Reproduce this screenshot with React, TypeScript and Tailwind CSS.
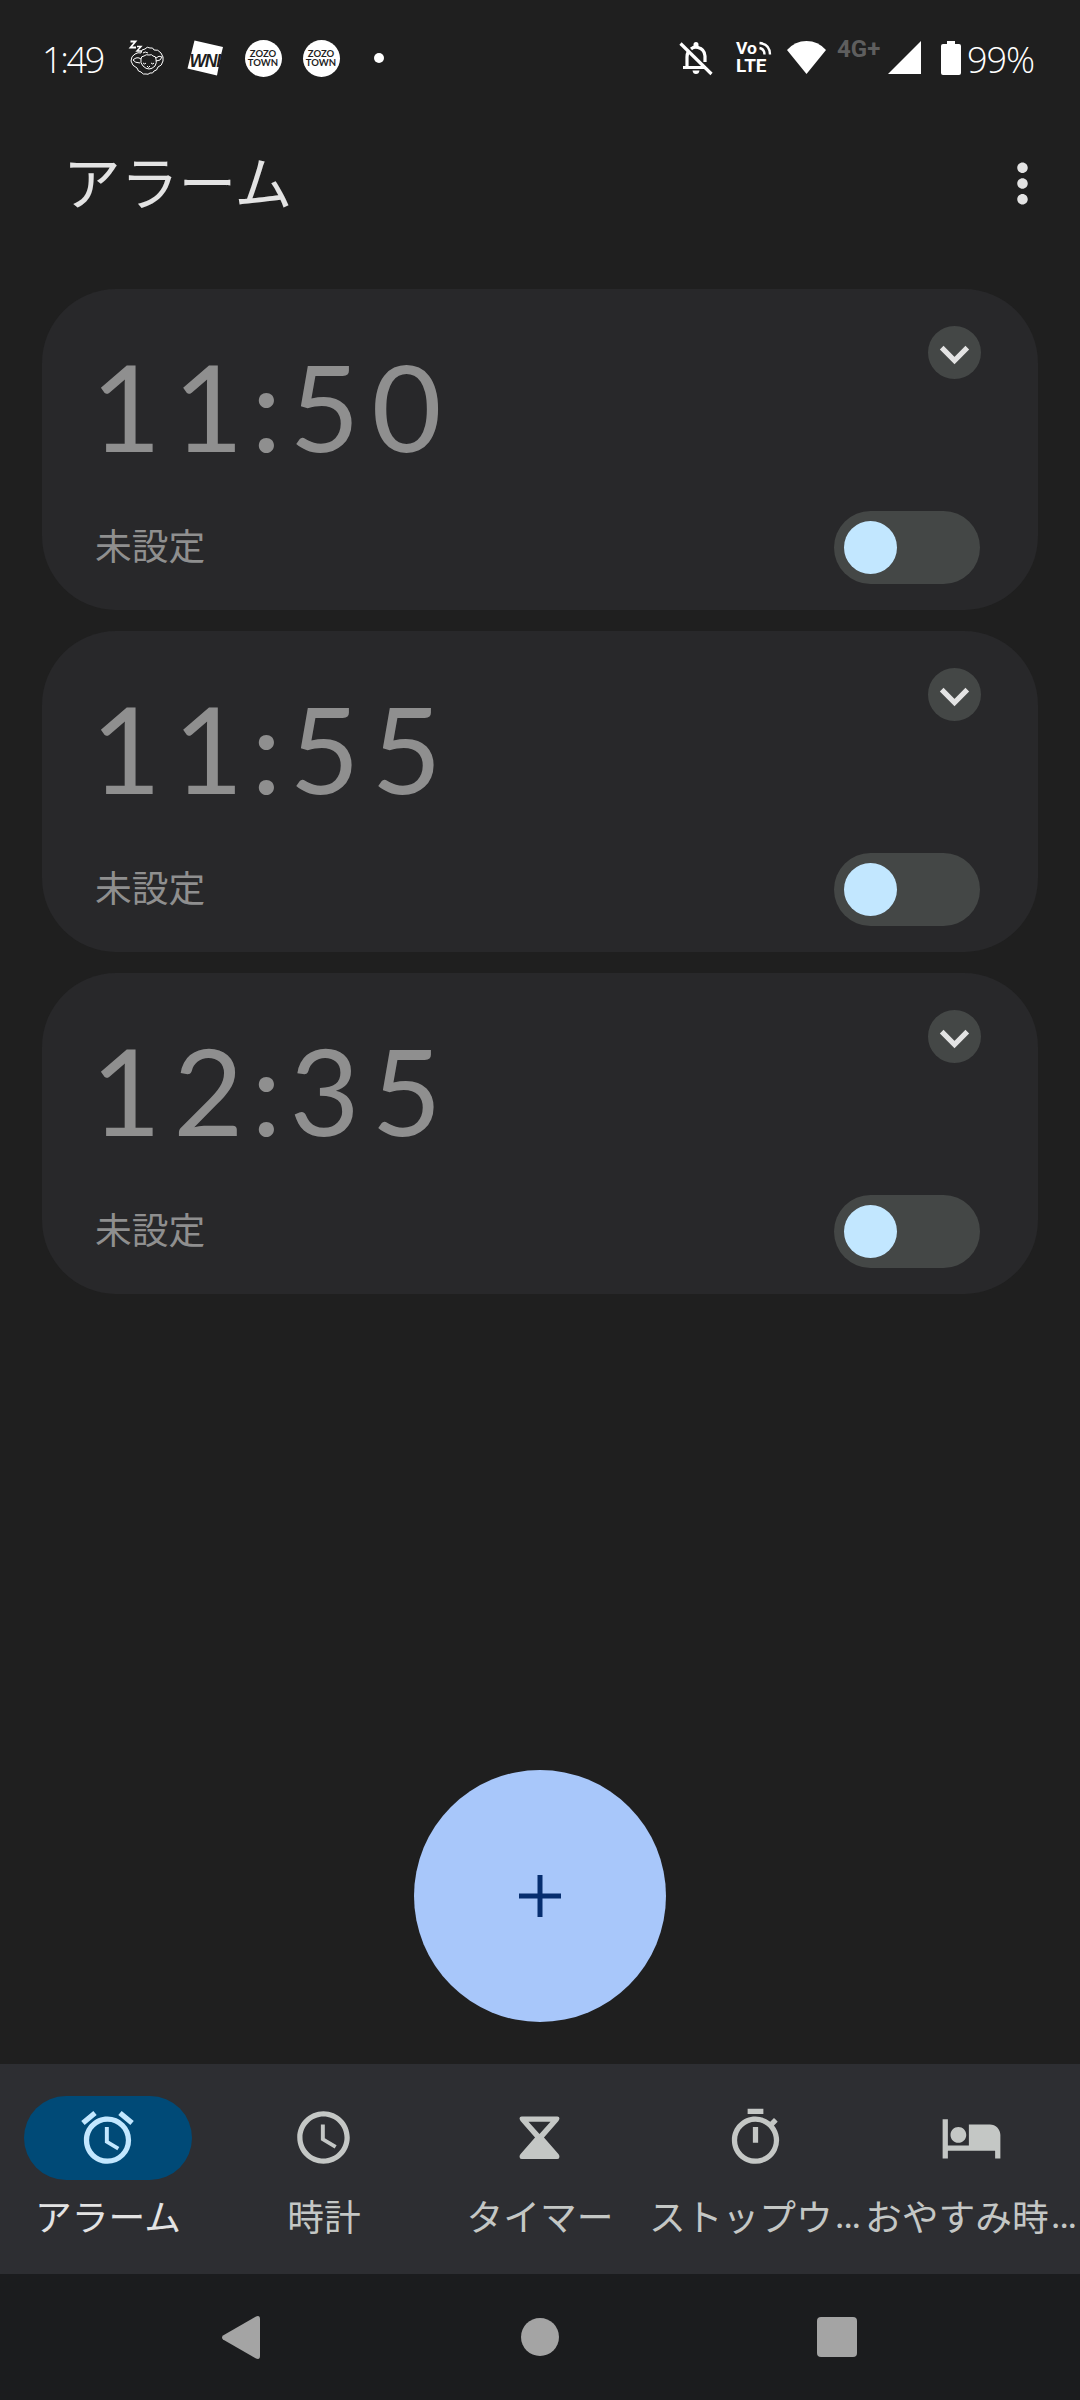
import React, { useState } from 'react';
import { MdAccessAlarm, MdAccessTime, MdMoreVert, MdOutlineTimer } from 'react-icons/md';

interface Alarm {
  id: number;
  hour: string;
  minute: string;
  label: string;
}

const alarms: Alarm[] = [
  { id: 1, hour: '11', minute: '50', label: '未設定' },
  { id: 2, hour: '11', minute: '55', label: '未設定' },
  { id: 3, hour: '12', minute: '35', label: '未設定' },
];

function SheepIcon() {
  return (
    <svg viewBox="0 0 38 38" className="w-[38px] h-[38px]" fill="none" stroke="white" strokeWidth="1">
      <path d="M2.500 2.500h5l-5 6h5.500" strokeWidth="1.800" />
      <path d="M9 7.500h4l-4 4.500h4.500" strokeWidth="1.500" />
      <path d="M13 14q0-4 4-4 2-3 5-1 3-1 4 2 4-1 7 3 3 4 2 8-1 5-5 6-1 4-4 4-1 3-4 2-2 2-4 1-3 1-5-2-3 0-4-4-5-2-6-7 0-5 4-7 3-2 6-1z" />
      <path d="M13 20q0-3 3-3 2-2 5-1 3-1 4 1 3 0 3 3 1 4-1 7-3 3-6 3t-6-3q-3-3-2-7z" />
      <path d="M13 20q-4-3-8 1 2 3 7 3M28 19q3-3 6-1-1 4-6 4M15 14q2-2 5 0" />
      <path d="M15 24q2 2 3 0M23 24q2 2 3 0M19 27l1.500 1.500L22 27" />
    </svg>
  );
}

function WeatherNewsIcon() {
  return (
    <svg viewBox="0 0 38 38" className="w-[38px] h-[38px]">
      <path d="M8.500 1.500 37 8 35.500 14 32.500 28.500 31 36.500 1.500 29.500z" fill="white" />
      <text
        x="3.500"
        y="27.500"
        fontFamily="Liberation Sans"
        fontWeight="700"
        fontStyle="italic"
        fontSize="17.500"
        letterSpacing="-1.200"
        fill="#1f1f1f"
      >
        WNI
      </text>
    </svg>
  );
}

function ZozoIcon() {
  return (
    <div className="flex size-[37px] mx-[0.5px] flex-col items-center justify-center rounded-full bg-white font-['Lato'] text-[9.5px] font-bold leading-[9.5px] text-[#1f1f1f]">
      <span>ZOZO</span>
      <span>TOWN</span>
    </div>
  );
}

function BellOffIcon() {
  return (
    <svg viewBox="0 0 38 38" className="ml-[1px] w-[38px] h-[38px]" fill="none" stroke="white" strokeWidth="3.200">
      <path d="M11.500 12q-1.500 3-1.500 6v10.500M6 28.500h23" />
      <path d="M14 10q3-2.500 7-1.500 6.500 1.500 7 8.500v6" />
      <path d="M3.500 4.500l31 30.500" />
      <path d="M16.500 7.500v-2q0-2.500 2.500-2.500t2.500 2.500v2zM15.500 31.500h7q-.5 3.500-3.500 3.500t-3.500-3.500z" fill="white" stroke="none" />
    </svg>
  );
}

function VolteIcon() {
  return (
    <svg viewBox="0 0 38 38" className="w-[38px] h-[38px]">
      <g fontFamily="Roboto" fontWeight="700" fill="white">
        <text x="1" y="14.500" fontSize="16.500" textLength="21" lengthAdjust="spacingAndGlyphs">Vo</text>
        <text x="1" y="33" fontSize="18.500" textLength="30.500" lengthAdjust="spacingAndGlyphs">LTE</text>
      </g>
      <path d="M24.500 9q5 1 5 6.500M24.500 4q10.500 1 10.500 11.500" fill="none" stroke="white" strokeWidth="2.400" />
    </svg>
  );
}

function StatusBar() {
  return (
    <div className="flex h-[116px] shrink-0 items-center text-white">
      <span className="w-[86px] ml-[42px] pt-[3px] font-['Open_Sans'] text-[36px] font-light leading-none tracking-[-2.3px]">
        1:49
      </span>
      <div className="flex items-center gap-5">
        <SheepIcon />
        <WeatherNewsIcon />
        <ZozoIcon />
        <ZozoIcon />
        <span className="mx-[14px] size-[10px] rounded-full bg-white" />
      </div>
      <div className="ml-auto mr-[46px] flex items-center">
        <BellOffIcon />
        <span className="w-[20px]" />
        <VolteIcon />
        <svg viewBox="0 0 39 34" className="ml-[14px] w-[39px] h-[34px]" fill="white">
          <path d="M0 9Q8 0 19.500 0T39 9L19.500 33z" />
        </svg>
        <span className="mb-[18px] ml-[11px] w-[51px] whitespace-nowrap font-['Roboto'] text-[24px] font-bold leading-none text-[#5e5e5e]">
          4G+
        </span>
        <svg viewBox="0 0 33 34" className="w-[33px] h-[34px]" fill="white">
          <path d="M33 0v33H0z" />
        </svg>
        <svg viewBox="0 0 20 34" className="ml-[20px] w-[20px] h-[34px]" fill="white">
          <path d="M6 0h8v3h4q2 0 2 2v27q0 2-2 2H2q-2 0-2-2V5q0-2 2-2h4z" />
        </svg>
        <span className="ml-[6px] w-[67px] whitespace-nowrap pt-[4px] font-['Open_Sans'] text-[36px] font-light leading-none tracking-[-1px]">
          99%
        </span>
      </div>
    </div>
  );
}

function Toggle() {
  const [on, setOn] = useState(false);
  return (
    <button
      role="switch"
      aria-checked={on}
      onClick={() => setOn(!on)}
      className={`flex h-[73px] w-[146px] items-center rounded-full bg-[#444746] px-[10px] ${on ? 'justify-end' : 'justify-start'}`}
    >
      <span className="size-[53px] rounded-full bg-[#c2e7ff]" />
    </button>
  );
}

function AlarmCard({ alarm }: { alarm: Alarm }) {
  return (
    <div className="flex h-[321px] justify-between rounded-[74px] bg-[#28282a] pl-[53px] pr-[58px] text-[#8f8f8f]">
      <div className="flex flex-col">
        <div className="mt-[57px] -ml-[4px] flex h-[120px] font-['Lato'] text-[121px] leading-[120px] tracking-[12px]">
          <span>{alarm.hour}</span>
          <span className="-ml-[12px] w-[46px] text-center tracking-normal">:</span>
          <span>{alarm.minute}</span>
        </div>
        <span className="mt-[51px] text-[36.75px] leading-[54px]">{alarm.label}</span>
      </div>
      <div className="flex flex-col items-end justify-between pt-[37px] pb-[26px]">
        <button className="-mr-px flex size-[53px] items-center justify-center rounded-full bg-[#444746]">
          <svg viewBox="0 0 53 53" className="size-[53px]" fill="none" stroke="#e3e3e3" strokeWidth="5.200">
            <path d="M13.700 21.700 26.500 34.500l12.800-12.800" />
          </svg>
        </button>
        <Toggle />
      </div>
    </div>
  );
}

function HourglassIcon() {
  return (
    <svg viewBox="0 0 24 24" className="size-[63px]" fill="currentColor">
      <path
        fillRule="evenodd"
        d="M5.200 4h13.600q.8 0 .8.700 0 .5-.4 1L13.700 12l5.500 6.300q.4.500.4 1 0 .9-.8.900H5.200q-.8 0-.8-.9 0-.5.400-1L10.300 12 4.800 5.700q-.4-.5-.4-1 0-.7.800-.7zM7.800 6 12 10.700 16.200 6z"
      />
    </svg>
  );
}

function BedIcon() {
  return (
    <svg viewBox="0 0 24 24" className="size-[63px]" fill="currentColor">
      <path d="M7 14c1.660 0 3-1.340 3-3S8.660 8 7 8s-3 1.340-3 3 1.340 3 3 3zm12-7h-8v8H3V5H1v15h2v-3h18v3h2v-9c0-2.210-1.790-4-4-4z" />
    </svg>
  );
}

const tabs = [
  { label: 'アラーム', icon: <MdAccessAlarm className="size-[63px]" /> },
  { label: '時計', icon: <MdAccessTime className="size-[63px]" /> },
  { label: 'タイマー', icon: <HourglassIcon /> },
  { label: 'ストップウ…', icon: <MdOutlineTimer className="size-[63px]" /> },
  { label: 'おやすみ時…', icon: <BedIcon /> },
];

function TabBar() {
  return (
    <nav className="grid h-[210px] shrink-0 grid-cols-5 bg-[#2d2e32]">
      {tabs.map((tab, i) => (
        <button
          key={tab.label}
          className={`flex min-w-0 flex-col items-center pt-[32px] ${i === 0 ? 'text-[#e3e3e3]' : 'text-[#c4c7c5]'}`}
        >
          <span
            className={`flex h-[84px] w-[168px] items-center justify-center rounded-full pr-[2px] pb-px ${i === 0 ? 'bg-[#004a77] text-[#c2e7ff]' : ''}`}
          >
            {tab.icon}
          </span>
          <span className="mt-[8px] flex h-[54px] whitespace-nowrap text-[36.75px] leading-[54px]">
            {tab.label.replace('…', '')}
            {tab.label.endsWith('…') && <span className="w-[30px] font-['Roboto'] text-[40px]">…</span>}
          </span>
        </button>
      ))}
    </nav>
  );
}

function SystemNav() {
  return (
    <div className="flex h-[126px] shrink-0 items-center justify-between bg-[#1b1c1e] pl-[222px] pr-[223px] text-[#a4a4a4]">
      <svg viewBox="0 0 38 43" className="w-[38px] h-[43px]" fill="currentColor">
        <path d="M34 .5q4-1.500 4 2.500v37q0 4-4 2.500L1 23.500q-2-2 0-4z" />
      </svg>
      <span className="ml-[3px] size-[38px] rounded-full bg-current" />
      <span className="size-[40px] rounded-[4px] bg-current" />
    </div>
  );
}

export default function App() {
  return (
    <div className="flex h-[2400px] w-[1080px] flex-col overflow-hidden bg-[#1f1f1f] font-['Noto_Sans_CJK_JP',sans-serif]">
      <StatusBar />
      <header className="flex h-[134px] shrink-0 items-center justify-between pl-[63px] pr-[26px] text-[#e3e3e3]">
        <h1 className="pb-[5px] text-[57.75px] leading-none">アラーム</h1>
        <MdMoreVert className="size-[63px]" />
      </header>
      <main className="flex flex-1 flex-col px-[42px] pt-[39px]">
        <div className="flex flex-col gap-[21px]">
          {alarms.map((alarm) => (
            <AlarmCard key={alarm.id} alarm={alarm} />
          ))}
        </div>
        <button className="mx-auto mt-auto mb-[42px] flex size-[252px] items-center justify-center rounded-full bg-[#a8c7fa] pr-px pb-px">
          <svg viewBox="0 0 42 42" className="size-[42px]" stroke="#062e6f" strokeWidth="5">
            <path d="M21 0v42M0 21h42" />
          </svg>
        </button>
      </main>
      <TabBar />
      <SystemNav />
    </div>
  );
}
